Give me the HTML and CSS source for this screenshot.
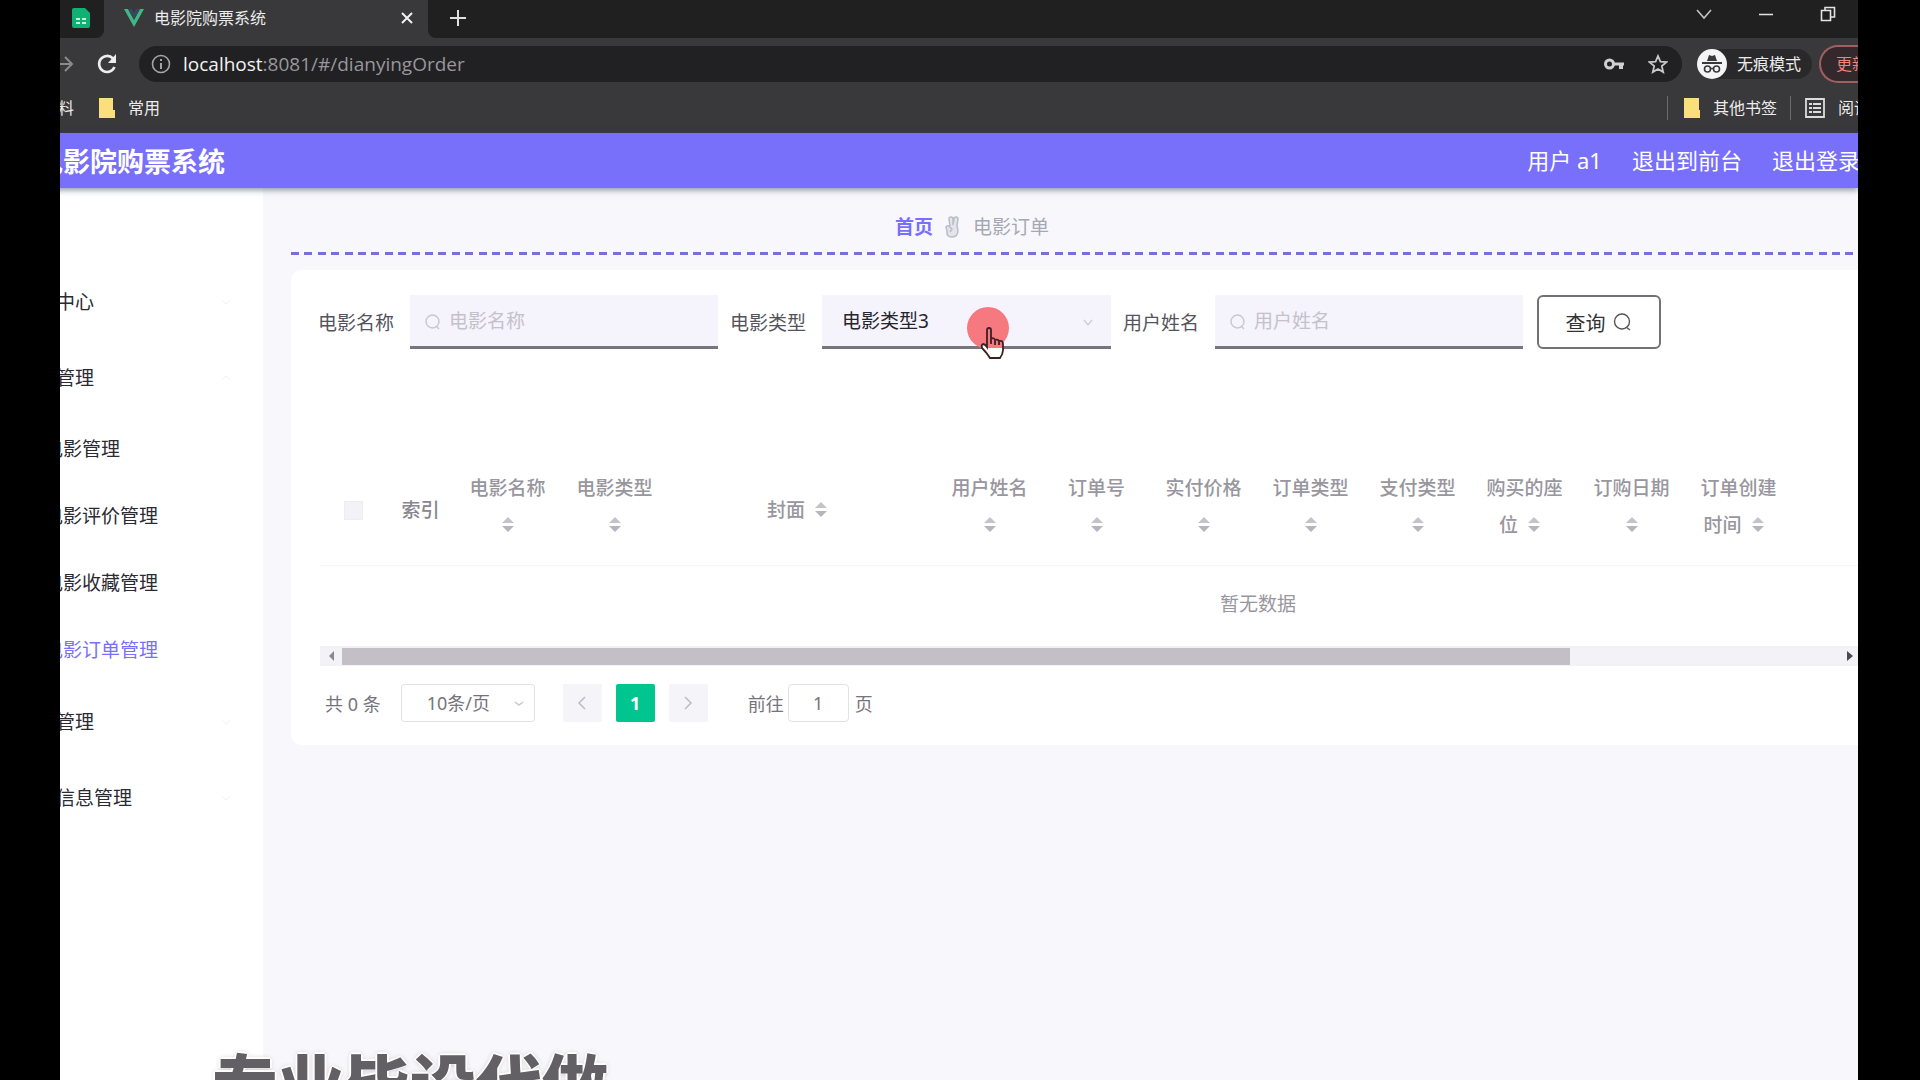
FILE: index.html
```html
<!DOCTYPE html>
<html lang="zh-CN">
<head>
<meta charset="utf-8">
<title>电影院购票系统</title>
<link rel="stylesheet" href="styles.css">
</head>
<body>
<div class="screen">
  <div class="browser">
    <div class="tabs">
      <div class="tab-pinned">
        <svg width="20" height="20" viewBox="0 0 20 20"><path d="M2 0h11l5 5v13a2 2 0 0 1-2 2H2a2 2 0 0 1-2-2V2a2 2 0 0 1 2-2z" fill="#0fb274"/><path d="M4 10h4v2H4zM10 10h4v2h-4zM4 14h4v2H4zM10 14h4v2h-4z" fill="#c6f3df"/></svg>
      </div>
      <div class="tab">
        <svg width="20" height="18" viewBox="0 0 20 18"><path d="M0 0h4l6 11 6-11h4L10 18z" fill="#41b883"/><path d="M4 0h4l2 4 2-4h4l-6 11z" fill="#35495e"/></svg>
        <span class="tab-title">电影院购票系统</span>
        <button class="icon-btn" aria-label="关闭标签页"><svg width="12" height="12" viewBox="0 0 12 12"><path d="M1 1l10 10M11 1L1 11" stroke="#f1f1f1" stroke-width="2"/></svg></button>
      </div>
      <button class="icon-btn new-tab" aria-label="新标签页"><svg width="16" height="16" viewBox="0 0 16 16"><path d="M8 0v16M0 8h16" stroke="#e0e0e0" stroke-width="2"/></svg></button>
      <div class="window-buttons">
        <button class="icon-btn" aria-label="搜索标签页"><svg width="16" height="16" viewBox="0 0 16 16"><path d="M1 4l7 8 7-8" fill="none" stroke="#c8c8c8" stroke-width="1.5"/></svg></button>
        <button class="icon-btn" aria-label="最小化"><svg width="16" height="16" viewBox="0 0 16 16"><path d="M1 8.500h14" stroke="#e4e4e4" stroke-width="1.500"/></svg></button>
        <button class="icon-btn" aria-label="还原"><svg width="16" height="16" viewBox="0 0 16 16"><path d="M1.500 4.500h9v10h-9zM5 4V1.500h9.500V11H11" fill="none" stroke="#e4e4e4" stroke-width="1.600"/></svg></button>
      </div>
    </div>
    <div class="toolbar">
      <button class="icon-btn forward" aria-label="前进"><svg width="14" height="18" viewBox="0 0 14 18"><path d="M0 9h12M5 2l7 7-7 7" fill="none" stroke="#8a8a8c" stroke-width="2"/></svg></button>
      <button class="icon-btn reload" aria-label="刷新"><svg width="20" height="22" viewBox="0 0 20 22"><path d="M16 5.500A8 8 0 1 0 17.500 14" fill="none" stroke="#ededed" stroke-width="2.600"/><path d="M19 1v9h-8z" fill="#ededed"/></svg></button>
      <div class="address">
        <svg width="20" height="20" viewBox="0 0 20 20"><circle cx="10" cy="10" r="8.500" fill="none" stroke="#a5a5a7" stroke-width="1.600"/><path d="M10 9v6M10 5v2" stroke="#a5a5a7" stroke-width="2"/></svg>
        <span class="url"><b>localhost</b>:8081/#/dianyingOrder</span>
        <svg width="20" height="14" viewBox="0 0 20 14"><circle cx="5.500" cy="7" r="4" fill="none" stroke="#d0d0d2" stroke-width="3"/><path d="M9 5.500h11v3h-1V12h-4V8.500H9z" fill="#d0d0d2"/></svg>
        <svg width="20" height="20" viewBox="0 0 20 20"><path d="M10 2l2.400 5.600 6 .5-4.600 4 1.400 6L10 15l-5.200 3.100 1.400-6-4.600-4 6-.5z" fill="none" stroke="#c8c8ca" stroke-width="1.800"/></svg>
      </div>
      <div class="incognito">
        <svg width="30" height="30" viewBox="0 0 30 30"><circle cx="15" cy="15" r="15" fill="#f4f4f5"/><path d="M10 12l2-6 3 1 3-1 2 6zM5 13h20v2H5z" fill="#39393b"/><circle cx="10.500" cy="20" r="3" fill="none" stroke="#39393b" stroke-width="1.600"/><circle cx="19.500" cy="20" r="3" fill="none" stroke="#39393b" stroke-width="1.600"/><path d="M13 19.500h4" stroke="#39393b" stroke-width="1.500"/></svg>
        <span>无痕模式</span>
      </div>
      <button class="update">更新</button>
    </div>
    <div class="bookmarks">
      <a href="#" class="bookmark">料</a>
      <a href="#" class="bookmark"><svg width="16" height="20" viewBox="0 0 16 20"><path d="M0 0h14v12h2v8H0z" fill="#fbdf7d"/></svg>常用</a>
      <a href="#" class="bookmark other"><svg width="16" height="20" viewBox="0 0 16 20"><path d="M0 0h15v12h1v8H0z" fill="#fbdf7d"/></svg>其他书签</a>
      <a href="#" class="bookmark reading"><svg width="20" height="20" viewBox="0 0 20 20"><path d="M1 1h18v18H1z" fill="none" stroke="#dcdcdc" stroke-width="1.800"/><path d="M4 6h3M8 6h8M4 10h3M8 10h8M4 14h3M8 14h8" stroke="#dcdcdc" stroke-width="2"/></svg>阅读</a>
    </div>
  </div>

  <div class="app">
    <header class="app-header">
      <h1>电影院购票系统</h1>
      <nav class="user-nav">
        <span>用户 a1</span>
        <a href="#">退出到前台</a>
        <a href="#">退出登录</a>
      </nav>
    </header>
    <div class="app-body">
      <aside class="sidebar">
        <a href="#" class="group">中心<svg width="10" height="6" viewBox="0 0 10 6"><path d="M1 1l4 4 4-4" fill="none" stroke="#f2f1f8"/></svg></a>
        <a href="#" class="group">管理<svg width="10" height="6" viewBox="0 0 10 6"><path d="M1 5l4-4 4 4" fill="none" stroke="#f2f1f8"/></svg></a>
        <div class="submenu">
          <a href="#">电影管理</a>
          <a href="#">电影评价管理</a>
          <a href="#">电影收藏管理</a>
          <a href="#" class="active">电影订单管理</a>
        </div>
        <a href="#" class="group">管理<svg width="10" height="6" viewBox="0 0 10 6"><path d="M1 1l4 4 4-4" fill="none" stroke="#f2f1f8"/></svg></a>
        <a href="#" class="group">信息管理<svg width="10" height="6" viewBox="0 0 10 6"><path d="M1 1l4 4 4-4" fill="none" stroke="#f2f1f8"/></svg></a>
      </aside>

      <main class="content">
        <div class="breadcrumb">
          <a href="#">首页</a>
          <svg width="16" height="22" viewBox="0 0 16 22"><path d="M5 10L4 3q0-2 2-2t2 2v6l1-6q0-2 2-2t2 2l-1 7 1 4q0 7-6 7t-5-6l-1-4q1-2 3-1l3 3-2 3" fill="#e3e5ea" stroke="#b9bdc6" stroke-width="1.500"/></svg>
          <span>电影订单</span>
        </div>
        <div class="dashes"></div>

        <section class="card">
          <form class="filters">
            <label for="film">电影名称</label>
            <div class="field">
              <svg class="lens" width="16" height="18" viewBox="0 0 16 18"><circle cx="7.500" cy="8.500" r="6.500" fill="none" stroke="#c9c6d2" stroke-width="1.400"/><path d="M11 13l3 3" stroke="#c9c6d2" stroke-width="1.400"/></svg>
              <input id="film" type="text" placeholder="电影名称">
            </div>
            <label for="kind">电影类型</label>
            <div class="field field-select">
              <select id="kind"><option>电影类型3</option></select>
              <svg class="arrow" width="10" height="8" viewBox="0 0 10 8"><path d="M1 1l4 5 4-5" fill="none" stroke="#cfccd8" stroke-width="1.400"/></svg>
              <span class="click-spot"></span>
              <svg class="hand" width="26" height="34" viewBox="0 0 26 34"><path d="M8 19V4q0-2 2-2t2 2v9q3-2 4 1 3-1 4 1 4-1 4 3v6q0 4-3 8H11Q8 27 3 22q-1-3 1-4 2 0 4 3z" fill="#fff"/><path class="hand-top" d="M8 19V4q0-2 2-2t2 2v9q3-2 4 1 3-1 4 1 4-1 4 3v4H7z" fill="#f6797f"/><path d="M8 21V4q0-2 2-2t2 2v9q3-2 4 1 3-1 4 1 4-1 4 3v6q0 4-3 8H11Q8 27 3 22q-1-3 1-4 2 0 4 3zM12 12v6M16 14v5M20 15v4" fill="none" stroke="#3a2024" stroke-width="1.800"/></svg>
            </div>
            <label for="user">用户姓名</label>
            <div class="field">
              <svg class="lens" width="16" height="18" viewBox="0 0 16 18"><circle cx="7.500" cy="8.500" r="6.500" fill="none" stroke="#c9c6d2" stroke-width="1.400"/><path d="M11 13l3 3" stroke="#c9c6d2" stroke-width="1.400"/></svg>
              <input id="user" type="text" placeholder="用户姓名">
            </div>
            <button type="button" class="search">查询<svg width="18" height="20" viewBox="0 0 18 20"><circle cx="9" cy="9.500" r="7.500" fill="none" stroke="#555" stroke-width="1.400"/><path d="M13 15l4 3" stroke="#555" stroke-width="1.400"/></svg></button>
          </form>

          <div class="table-view">
            <table>
              <colgroup><col class="c-s"><col class="c-s"><col class="c-m"><col class="c-m"><col class="c-l"><col class="c-m"><col class="c-m"><col class="c-m"><col class="c-m"><col class="c-m"><col class="c-m"><col class="c-m"><col class="c-m"><col></colgroup>
              <thead>
                <tr>
                  <th class="single"><input type="checkbox" aria-label="全选" disabled></th>
                  <th class="single">索引</th>
                  <th>电影名称<i class="sort"></i></th>
                  <th>电影类型<i class="sort"></i></th>
                  <th class="single">封面<i class="sort"></i></th>
                  <th>用户姓名<i class="sort"></i></th>
                  <th>订单号<i class="sort"></i></th>
                  <th>实付价格<i class="sort"></i></th>
                  <th>订单类型<i class="sort"></i></th>
                  <th>支付类型<i class="sort"></i></th>
                  <th>购买的座位<i class="sort"></i></th>
                  <th>订购日期<i class="sort"></i></th>
                  <th>订单创建时间<i class="sort"></i></th>
                  <th></th>
                </tr>
              </thead>
              <tbody><tr><td colspan="14">暂无数据</td></tr></tbody>
            </table>
          </div>
          <div class="scrollbar">
            <svg width="22" height="20" viewBox="0 0 22 20"><path d="M14 5v10l-5-5z" fill="#8b898f"/></svg>
            <div class="track"><div class="thumb"></div></div>
            <svg width="18" height="20" viewBox="0 0 18 20"><path d="M7 5v10l6-5z" fill="#4b494f"/></svg>
          </div>

          <div class="pagination">
            <span class="total">共 0 条</span>
            <div class="size">
              <select aria-label="每页条数"><option>10条/页</option></select>
              <svg class="arrow" width="10" height="6" viewBox="0 0 10 6"><path d="M1 1l4 3 4-3" fill="none" stroke="#c9c6d0" stroke-width="1.400"/></svg>
            </div>
            <div class="pager">
              <button aria-label="上一页"><svg width="10" height="14" viewBox="0 0 10 14"><path d="M8 1L2 7l6 6" fill="none" stroke="#bdbbc4" stroke-width="1.500"/></svg></button>
              <button class="current">1</button>
              <button aria-label="下一页"><svg width="10" height="14" viewBox="0 0 10 14"><path d="M2 1l6 6-6 6" fill="none" stroke="#bdbbc4" stroke-width="1.500"/></svg></button>
            </div>
            <label for="page">前往</label>
            <input id="page" type="text" value="1">
            <span>页</span>
          </div>
        </section>
      </main>
    </div>
  </div>
  <div class="caption">专业毕设代做</div>
</div>
</body>
</html>
```

FILE: styles.css
```css
* { box-sizing: border-box; }

body {
  margin: 0;
  background: #000;
  font-family: "Noto Sans", "Noto Sans CJK SC", sans-serif;
  font-size: 19px;
}

a { color: inherit; text-decoration: none; }
svg { display: block; flex: none; }
button, input, select { font: inherit; color: inherit; margin: 0; }

.screen {
  position: relative;
  display: flex;
  flex-direction: column;
  height: 100vh;
  margin: 0 62px 0 60px;
  overflow: hidden;
  background: #f8f7fc;
}

/* browser chrome */
.browser {
  background: #39383b;
  color: #ececec;
  font-size: 16px;
  line-height: 24px;
}

.icon-btn {
  display: flex;
  padding: 0;
  border: 0;
  background: none;
}

.tabs {
  display: flex;
  height: 38px;
  background: #39383b;
}

.tab-pinned {
  width: 44px;
  padding: 8px 0 0 12px;
  background: #202021;
  border-bottom-right-radius: 8px;
}

.tab {
  display: flex;
  align-items: center;
  gap: 10px;
  width: 324px;
  padding: 0 15px 2px 20px;
}

.tab-title { flex: 1; }

.new-tab {
  flex: 1;
  align-items: center;
  padding: 0 0 2px 22px;
  background: #202021;
  border-bottom-left-radius: 8px;
}

.window-buttons {
  display: flex;
  gap: 46px;
  padding: 6px 22px 0 0;
  background: #202021;
}

.toolbar {
  display: flex;
  align-items: center;
  height: 52px;
  background: #39383b;
}

.reload { margin: 0 22px 0 23px; }

.address {
  display: flex;
  flex: 1;
  align-items: center;
  gap: 24px;
  height: 36px;
  padding: 0 14px 0 12px;
  border-radius: 18px;
  background: #212023;
}

.url {
  flex: 1;
  margin-left: -12px;
  font-family: "Open Sans", sans-serif;
  font-size: 19px;
  color: #98979b;
}

.url b { font-weight: 400; color: #f2f2f2; }

.incognito {
  display: flex;
  align-items: center;
  gap: 10px;
  margin: 0 7px 0 15px;
  padding-right: 11px;
  border-radius: 15px;
  background: #29282b;
}

.update {
  width: 39px;
  height: 38px;
  padding: 0 0 0 15px;
  overflow: hidden;
  border: 2px solid #a05f62;
  border-right: 0;
  border-radius: 19px 0 0 19px;
  background: #33282b;
  color: #ee8180;
  text-align: left;
  white-space: nowrap;
}

.bookmarks {
  display: flex;
  height: 43px;
  padding: 0 0 7px;
  align-items: center;
  gap: 25px;
  white-space: nowrap;
}

.bookmark {
  display: flex;
  align-items: center;
  gap: 13px;
}

.bookmark:first-child { margin-left: -2px; }

.other {
  margin-left: auto;
  margin-right: -12px;
  padding-left: 16px;
  border-left: 1px solid #6b6a6d;
}

.reading {
  width: 68px;
  padding-left: 14px;
  border-left: 1px solid #6b6a6d;
}

/* application */
.app {
  display: flex;
  flex: 1;
  flex-direction: column;
  margin-left: -24px;
}

.app-header {
  display: flex;
  align-items: center;
  justify-content: space-between;
  position: relative;
  height: 55px;
  background: #786ffb;
  box-shadow: 0 2px 6px rgba(60, 80, 90, 0.6);
  color: #fff;
}

.app-header h1 {
  margin: 0;
  padding-top: 2px;
  font-size: 27px;
  line-height: 40px;
}

.user-nav {
  display: flex;
  gap: 30px;
  margin-right: -2px;
  padding-bottom: 2px;
  font-size: 22px;
  line-height: 32px;
}

.app-body { display: flex; flex: 1; }

.sidebar {
  width: 227px;
  padding: 76px 32px 0 8px;
  background: #fff;
  color: #2b2a33;
}

.sidebar a { display: block; line-height: 67px; }

.sidebar .group {
  display: flex;
  align-items: center;
  justify-content: space-between;
  padding-left: 12px;
  line-height: 76px;
}

.sidebar .active { color: #786ffb; }

.content {
  flex: 1;
  min-width: 0;
  padding-left: 28px;
}

.breadcrumb {
  display: flex;
  align-items: center;
  gap: 12px;
  padding: 20px 0 6px 604px;
  line-height: 38px;
  color: #a5a8b3;
}

.breadcrumb a { color: #786ffb; font-weight: 700; }

.dashes {
  height: 3px;
  background: repeating-linear-gradient(90deg,
    #786fdf 0 8px, transparent 8px 13px,
    #786fdf 13px 21px, transparent 21px 27px,
    #786fdf 27px 35px, transparent 35px 40px,
    #786fdf 40px 48px, transparent 48px 54px,
    #786fdf 54px 62px, transparent 62px 67px);
}

.card {
  margin-top: 15px;
  padding: 25px 0 23px 29px;
  border-radius: 10px 0 0 10px;
  background: #fff;
}

.filters {
  display: flex;
  align-items: center;
  gap: 14px;
  color: #55545c;
}

.filters label { margin: 0 2px 0 -2px; }

.field { position: relative; width: 308px; }
.field-select { width: 289px; }

.field input,
.field select {
  display: block;
  width: 100%;
  height: 54px;
  border: 0;
  border-bottom: 3px solid #77757d;
  border-radius: 0;
  outline: 0;
  background: #f5f3fb;
}

.field input { padding: 0 16px 0 39px; }
.field input::placeholder { color: #c4c1cc; opacity: 1; }

.field select {
  padding: 0 20px;
  appearance: none;
  color: #26252b;
}

.lens { position: absolute; left: 15px; top: 18px; }
.field .arrow { position: absolute; right: 18px; top: 24px; }

.click-spot {
  position: absolute;
  left: 145px;
  top: 12px;
  width: 42px;
  height: 42px;
  border-radius: 50%;
  background: #f6797f;
}

.hand { position: absolute; left: 157px; top: 31px; }

.search {
  display: flex;
  align-items: center;
  justify-content: center;
  gap: 7px;
  width: 124px;
  height: 54px;
  padding: 0 2px 0 0;
  border: 2px solid #737178;
  border-radius: 6px;
  background: #fff;
  color: #333;
  font-size: 20px;
}

.table-view {
  margin-top: 101px;
  overflow: hidden;
}

.table-view table {
  width: 1876px;
  table-layout: fixed;
  border-collapse: collapse;
  line-height: 37px;
  color: #98969e;
}

.c-s { width: 67px; }
.c-m { width: 107px; }
.c-l { width: 268px; }

.table-view th {
  height: 115px;
  padding: 20px 13px;
  border-bottom: 1px solid #f6f5fa;
  font-weight: 500;
}

.table-view th.single { padding: 27px 0 20px; }

.table-view th:nth-child(2) { color: #88868e; }

.table-view td {
  height: 81px;
  padding: 0 0 2px;
  text-align: center;
}

.table-view input {
  display: block;
  width: 19px;
  height: 19px;
  margin: auto;
  appearance: none;
  border: 1px solid #eeedf3;
  background: #f3f2f6;
}

.sort {
  display: inline-flex;
  flex-direction: column;
  align-items: center;
  gap: 3px;
  width: 32px;
  padding-bottom: 5px;
  vertical-align: middle;
}

.sort::before,
.sort::after {
  content: "";
  border: 6px solid transparent;
}

.sort::before { border-top: 0; border-bottom-color: #c4c2ca; }
.sort::after { border-bottom: 0; border-top-color: #b6b4bd; }

.scrollbar {
  display: flex;
  align-items: center;
  height: 20px;
  background: #f3f2f6;
}

.track { flex: 1; }

.thumb {
  width: 82%;
  height: 17px;
  background: #c2c0c6;
}

.pagination {
  display: flex;
  align-items: center;
  margin-top: 18px;
  padding-left: 5px;
  color: #76747b;
  font-size: 18px;
}

.size { position: relative; width: 134px; margin: 0 28px 0 20px; }

.size select {
  display: block;
  width: 100%;
  height: 38px;
  padding: 0 0 0 25px;
  appearance: none;
  border: 1px solid #e2e0e9;
  border-radius: 3px;
  background: #fff;
}

.size .arrow { position: absolute; right: 11px; top: 17px; }

.pager { display: flex; gap: 14px; margin-right: 40px; }

.pager button {
  display: flex;
  align-items: center;
  justify-content: center;
  width: 39px;
  height: 38px;
  padding: 0;
  border: 0;
  border-radius: 2px;
  background: #f5f4f8;
}

.pager .current { background: #00c58e; color: #fff; font-weight: 700; }

.pagination > input {
  width: 61px;
  height: 38px;
  margin: 0 6px 0 4px;
  border: 1px solid #e2e0e9;
  border-radius: 4px;
  background: #fff;
  text-align: center;
}

/* video caption running past the bottom edge */
.caption {
  position: absolute;
  left: 152px;
  bottom: -44px;
  color: #626065;
  font-size: 66px;
  font-weight: 900;
  line-height: 80px;
  white-space: nowrap;
  text-shadow: 0 0 2px #fff, 2px 0 1px #fff, -2px 0 1px #fff, 0 -2px 1px #fff, 0 0 5px #aaa;
}
```
